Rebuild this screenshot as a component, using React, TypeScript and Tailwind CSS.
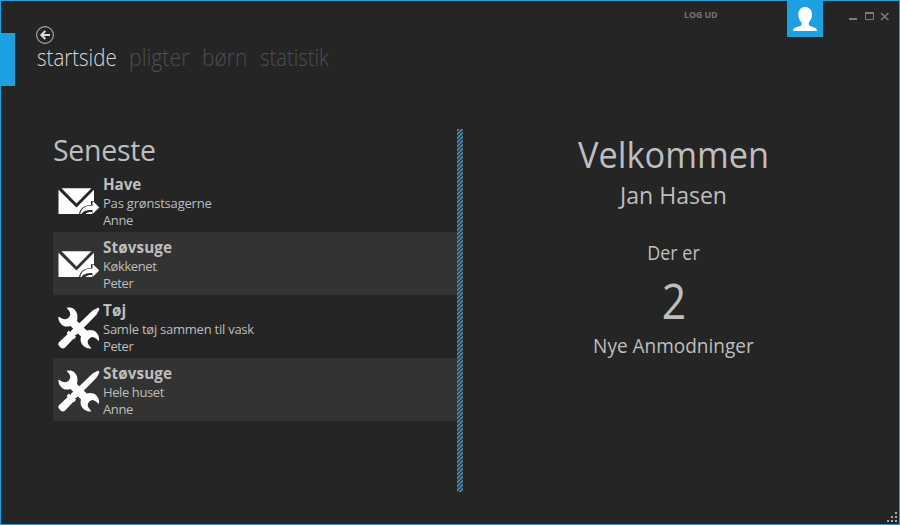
import React from "react";

type IconKind = "mail" | "tools";

const entries: { title: string; detail: string; person: string; icon: IconKind; titleClass: string; detailClass: string }[] = [
  { title: "Have", detail: "Pas grønstsagerne", person: "Anne", icon: "mail", titleClass: "tracking-[-0.1px]", detailClass: "tracking-[-0.2px]" },
  { title: "Støvsuge", detail: "Køkkenet", person: "Peter", icon: "mail", titleClass: "tracking-[0.1px]", detailClass: "tracking-[-0.4px]" },
  { title: "Tøj", detail: "Samle tøj sammen til vask", person: "Peter", icon: "tools", titleClass: "tracking-[0.1px]", detailClass: "tracking-[-0.24px]" },
  { title: "Støvsuge", detail: "Hele huset", person: "Anne", icon: "tools", titleClass: "tracking-[0.1px]", detailClass: "tracking-[-0.4px]" },
];

function MailIcon() {
  return (
    <svg className="h-[42px] w-[42px]" viewBox="0 0 42 42" fill="#fff">
      <path d="M3.5 7.2H33.5L18.5 22.4Z" />
      <path d="M0.5 8.8 18.5 26.4 36 8.8V20H33V24C26 24.2 22 27.6 21 33H0.5Z" />
      <path d="M34.5 19.8 41.3 26.6 34.5 33V29.2C29 28.8 25.8 29.9 23.4 32.9H22.3C23 27.7 27.2 24.4 34.5 24.5Z" />
      <path d="M27.5 33C29.5 31.2 32 30.8 34 31.1V33Z" />
    </svg>
  );
}

function ToolsIcon() {
  return (
    <svg className="h-[42px] w-[42px]" viewBox="0 0 42 42" fill="#fff">
      <path d="M8.7.8C11 0 14.5.5 16.5 2.4C19.3 5 20.2 9 19 14L28.7 23.6C32 22.4 36 23 38.4 25.4C40.7 27.8 41.6 31 41 33.9C39.2 33.3 37.6 30.3 34.6 30C32 30.4 29.8 32.5 29.6 35C29.8 38 32.4 39.6 33.4 41.2C30.4 42 27 40.8 24.8 38.3C22.5 35.7 22 32.5 23 29.6L12.5 19C9.2 20.1 6 19.6 3.6 17.4C1.2 15.3 0 12.5.5 9.7C2.5 10.2 4.3 12.4 7.3 12.3C9.7 12 12 9.8 12.3 7.2C12.3 4.3 9.8 2.8 8.7.8Z" />
      <path d="M40.2.6 41.5 2.2 38.7 7.5 24.5 22 18.1 28 16.7 28.2 18.1 29.8 16.2 31.9 14.9 32.2 6.9 40.8C5.7 42 3.8 41.8 2.6 40.5L1 38.8C-.1 37.7.1 36.2 1.2 35.1L9.5 27.2 8.8 25.7 10.9 23.5 12.5 25.3 13.4 23.3 19 18.5 34.6 3.5Z" />
    </svg>
  );
}

function Header() {
  return (
    <header className="flex h-[128px] shrink-0 items-start">
      <div className="mt-8 h-[53px] w-[14px] bg-[#1ba1e2]" />
      <div className="ml-[21px] pt-[24px]">
        <svg className="block h-[19px] w-[19px]" viewBox="0 0 19 19" fill="none">
          <circle cx="9" cy="10" r="8.4" stroke="#aaa" strokeWidth="1.1" />
          <path d="M14 10H5.5M9.3 6 5.3 10 9.3 14" stroke="#ddd" strokeWidth="2" />
        </svg>
        <nav className="-mt-[3px] ml-px flex h-8 items-center whitespace-nowrap text-[23px] leading-8 font-light text-[#4e4e4e]">
          <a className="w-[92px] origin-left scale-x-[0.89] text-[#d8d8d8]">startside</a>
          <a className="w-[73px] origin-left scale-x-[0.925]">pligter</a>
          <a className="w-[58px] origin-left scale-x-[0.91]">børn</a>
          <a className="origin-left scale-x-[0.88]">statistik</a>
        </nav>
      </div>
      <div className="ml-auto flex items-start">
        <span className="mr-[69px] w-[34px] origin-left scale-x-[0.92] whitespace-nowrap pt-[7px] text-[9.5px] leading-[13px] font-bold text-[#757575]">LOG UD</span>
        <div className="h-9 w-9 bg-[#1ba1e2]">
          <svg className="h-9 w-9" viewBox="0 0 36 36" fill="#fff">
            <path d="M18 6C22.5 6 25 9 25 13.5C25 17 23.5 19.5 21.8 21.5V24C23.5 26.2 30 25.5 30 30H6C6 25.5 12.5 26.2 14.5 24V21.5C12.5 19.5 11.3 17 11.3 13.5C11.3 9 13.8 6 18 6Z" />
          </svg>
        </div>
        <svg className="mr-[8px] ml-[25px] mt-[9px] h-4 w-[43px]" viewBox="0 0 43 16" fill="none" stroke="#7c7c7c">
          <path d="M1 9H9" strokeWidth="2" />
          <path d="M17 3H26" strokeWidth="2" />
          <path d="M17.5 3V9.5H25.5V3" />
          <path d="M33 3 40.5 10M40.5 3 33 10" strokeWidth="1.6" />
        </svg>
      </div>
    </header>
  );
}

export default function App() {
  return (
    <div className="flex h-[525px] w-[900px] flex-col overflow-hidden border border-[#1ba1e2] bg-[#252525] font-['Open_Sans','Noto_Sans',sans-serif] text-[#bebebe]">
      <Header />
      <main className="flex h-[363px] shrink-0">
        <section className="ml-[52px] w-[404px]">
          <h1 className="h-[40px] origin-left scale-x-[0.965] pt-px text-[29.5px] leading-10 tracking-[-0.3px]">Seneste</h1>
          <ul>
            {entries.map((e, i) => (
              <li key={i} className={`flex h-[63px] ${i % 2 ? "bg-[#333333]" : ""}`}>
                <div className="ml-[5px] w-[45px] pt-3">{e.icon === "mail" ? <MailIcon /> : <ToolsIcon />}</div>
                <div className="whitespace-nowrap text-[13px] leading-[17px]">
                  <h2 className={`h-[26px] pt-[5px] text-[15.25px] leading-5 font-bold ${e.titleClass}`}>{e.title}</h2>
                  <p className={e.detailClass}>{e.detail}</p>
                  <p className="tracking-[-0.4px]">{e.person}</p>
                </div>
              </li>
            ))}
          </ul>
        </section>
        <div className="w-[6px] bg-[linear-gradient(135deg,#4688a8_25%,#2c4554_25%,#2c4554_50%,#4688a8_50%,#4688a8_75%,#2c4554_75%)] bg-[length:4px_4px]" />
        <section className="ml-[10px] flex w-[401px] flex-col items-center whitespace-nowrap">
          <h1 className="h-[48px] scale-x-[0.94] pt-px text-[36.5px] leading-[48px]">Velkommen</h1>
          <p className="h-9 scale-x-[0.98] text-[23.5px] leading-9">Jan Hasen</p>
          <p className="mt-[26px] h-7 scale-x-[0.92] text-[19.5px] leading-7">Der er</p>
          <p className="h-[66px] scale-x-[0.88] text-[48.5px] leading-[66px]">2</p>
          <p className="-mt-px h-7 scale-x-[0.975] text-[19.5px] leading-7">Nye Anmodninger</p>
        </section>
      </main>
      <footer className="mt-auto flex justify-end pr-[2px] pb-[2px]">
        <svg className="h-[10px] w-[10px]" viewBox="0 0 10 10" fill="#a8a8a8">
          <path d="M8 0h2v2H8zM4 4h2v2H4zM8 4h2v2H8zM0 8h2v2H0zM4 8h2v2H4zM8 8h2v2H8z" />
        </svg>
      </footer>
    </div>
  );
}
